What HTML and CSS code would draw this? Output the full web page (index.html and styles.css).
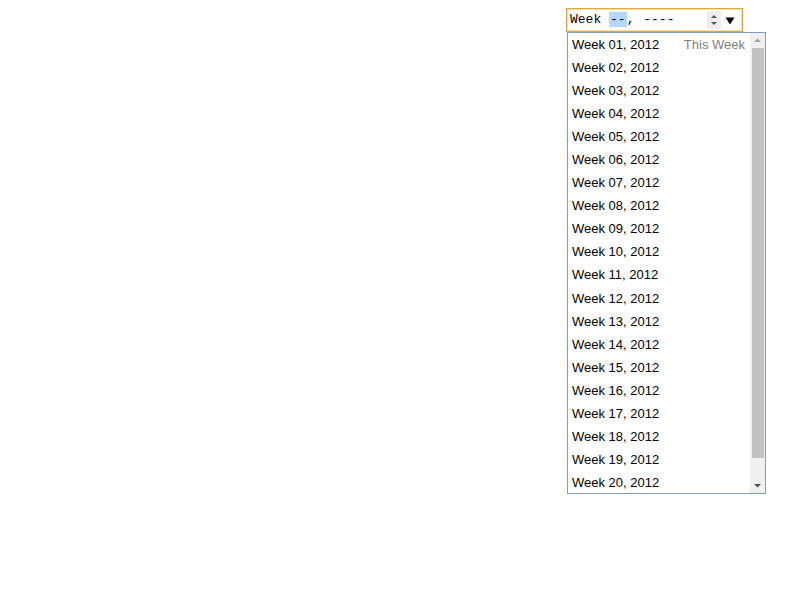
FILE: index.html
```html
<!DOCTYPE html>
<html>
<head>
<meta charset="utf-8">
<link rel="stylesheet" href="styles.css">
</head>
<body>
<div class="page">
  <div class="picker">
    <div class="field">
      <span class="txt">Week <span class="seg sel">--</span>, <span class="seg">----</span></span>
      <span class="spin">
        <svg width="14" height="18" viewBox="0 0 14 18"><path d="M4 7 L7 4 L10 7 Z" fill="#555"/><path d="M4 11 L7 14 L10 11 Z" fill="#555"/></svg>
      </span>
      <span class="drop">
        <svg width="10" height="8" viewBox="0 0 10 8"><path d="M0.5 0.5 L9.5 0.5 L5 7.5 Z" fill="#000"/></svg>
      </span>
    </div>
    <div class="list">
      <div class="rows">
        <div class="row"><span>Week 01, 2012</span><span class="tag">This Week</span></div>
        <div class="row">Week 02, 2012</div>
        <div class="row">Week 03, 2012</div>
        <div class="row">Week 04, 2012</div>
        <div class="row">Week 05, 2012</div>
        <div class="row">Week 06, 2012</div>
        <div class="row">Week 07, 2012</div>
        <div class="row">Week 08, 2012</div>
        <div class="row">Week 09, 2012</div>
        <div class="row">Week 10, 2012</div>
        <div class="row">Week 11, 2012</div>
        <div class="row">Week 12, 2012</div>
        <div class="row">Week 13, 2012</div>
        <div class="row">Week 14, 2012</div>
        <div class="row">Week 15, 2012</div>
        <div class="row">Week 16, 2012</div>
        <div class="row">Week 17, 2012</div>
        <div class="row">Week 18, 2012</div>
        <div class="row">Week 19, 2012</div>
        <div class="row">Week 20, 2012</div>
      </div>
      <div class="sb">
        <div class="sb-btn"><svg width="15" height="15" viewBox="0 0 15 15"><path d="M4 9 L7.5 5.5 L11 9 Z" fill="#a3a3a3"/></svg></div>
        <div class="sb-track"><div class="sb-thumb"></div></div>
        <div class="sb-btn"><svg width="15" height="15" viewBox="0 0 15 15"><path d="M4 6 L7.5 9.5 L11 6 Z" fill="#505050"/></svg></div>
      </div>
    </div>
  </div>
</div>
</body>
</html>
```

FILE: styles.css
```css
html, body {
  margin: 0;
  padding: 0;
  background: #fff;
}
.page {
  width: 800px;
  height: 600px;
  padding: 8px 0 0 566px;
  box-sizing: border-box;
}
.picker {
  position: relative;
  width: 177px;
}
.field {
  box-sizing: border-box;
  width: 177px;
  height: 24px;
  border: 1px solid #e3a53f;
  box-shadow: inset 0 0 0 1px #f6dcae;
  display: flex;
  align-items: center;
  padding-left: 3px;
  font-family: "Liberation Mono", monospace;
  font-size: 13px;
  color: #000;
}
.txt {
  white-space: pre;
  flex: 1;
  line-height: 16px;
}
.seg {
  padding: 0 1px;
}
.sel {
  background: #b3d7ff;
}
.spin {
  width: 14px;
  height: 18px;
  background: #ececec;
  display: flex;
  margin-right: 4px;
}
.drop {
  width: 10px;
  height: 8px;
  display: flex;
  margin-right: 7px;
  margin-top: 1px;
}
.list {
  position: absolute;
  left: 1px;
  top: 24px;
  width: 199px;
  height: 462px;
  box-sizing: border-box;
  border: 1px solid #7f9db9;
  background: #fff;
  display: flex;
  font-family: "Liberation Sans", Arial, sans-serif;
  font-size: 13px;
  color: #000;
}
.rows {
  flex: 1;
  overflow: hidden;
}
.row {
  height: 23.06px;
  line-height: 23px;
  padding: 0 5px 0 4px;
  display: flex;
  justify-content: space-between;
  white-space: nowrap;
}
.tag {
  color: #808080;
}
.sb {
  width: 15px;
  background: #f0f0f0;
  display: flex;
  flex-direction: column;
}
.sb-btn {
  height: 15px;
  display: flex;
}
.sb-track {
  flex: 1;
  padding: 0 1px 0 2px;
}
.sb-thumb {
  height: 410px;
  background: #c1c1c1;
}
```
